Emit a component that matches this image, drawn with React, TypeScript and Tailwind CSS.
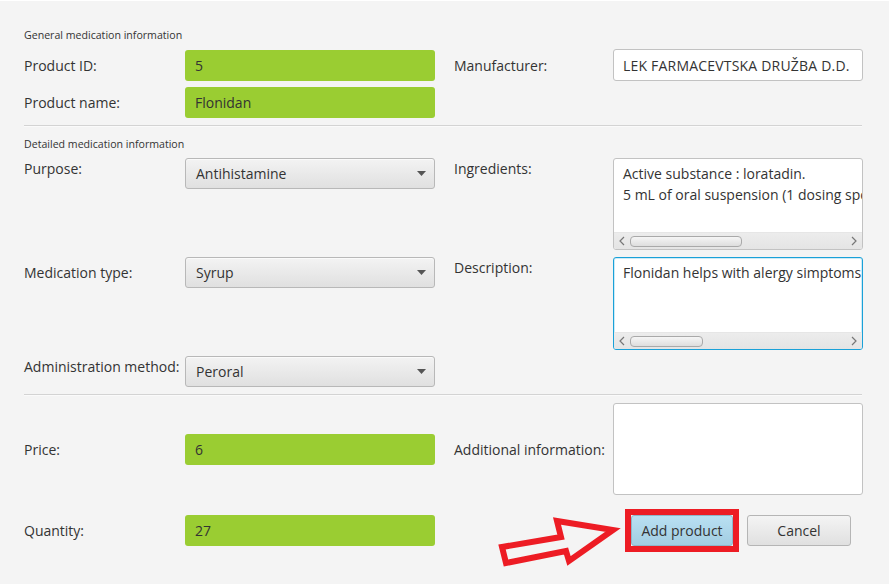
import React from "react";

function GreenField({ value }: { value: string }) {
  return (
    <div className="flex h-[31px] w-[250px] items-center rounded-[3px] bg-[#9acd32] px-[10px] text-[14px] text-[#333]">
      {value}
    </div>
  );
}

function Combo({ value }: { value: string }) {
  return (
    <div className="flex h-[31px] w-[250px] items-center justify-between rounded-[3px] border border-[#b8b8b8] bg-gradient-to-b from-[#f3f3f3] to-[#e0e0e0] pl-[10px] pr-[8px] text-[14px] text-[#333] shadow-[inset_0_1px_0_#fafafa]">
      <span>{value}</span>
      <svg width="9" height="5" viewBox="0 0 9 5">
        <polygon points="0,0 9,0 4.5,5" fill="#555" />
      </svg>
    </div>
  );
}

function ScrollBar({ thumb }: { thumb: number }) {
  return (
    <div className="flex h-[17px] shrink-0 items-center border-t border-[#e6e6e6] bg-gradient-to-b from-[#ececec] to-[#e4e4e4] px-[4px]">
      <svg width="8" height="10" viewBox="0 0 8 10" className="shrink-0">
        <polyline points="6,1 2,5 6,9" fill="none" stroke="#777" strokeWidth="1.2" />
      </svg>
      <div className="ml-[4px] h-[11px] rounded-[4px] border border-[#a9a9a9] bg-gradient-to-b from-[#f5f5f5] to-[#dedede]" style={{ width: thumb }} />
      <div className="flex-1" />
      <svg width="8" height="10" viewBox="0 0 8 10" className="shrink-0">
        <polyline points="2,1 6,5 2,9" fill="none" stroke="#777" strokeWidth="1.2" />
      </svg>
    </div>
  );
}

function TextArea({
  lines,
  focused,
  scroll,
  thumb,
  h,
}: {
  lines: string[];
  focused?: boolean;
  scroll?: boolean;
  thumb?: number;
  h: string;
}) {
  return (
    <div
      className={
        "flex w-[250px] flex-col overflow-hidden rounded-[3px] bg-white " +
        h +
        (focused
          ? " border border-[#1aa1d8] shadow-[inset_0_0_0_1px_#cdeaf6]"
          : " border border-[#c2c2c2]")
      }
    >
      <div className="flex-1 overflow-hidden whitespace-nowrap pl-[9px] pt-[4px] text-[14px] leading-[21px] text-[#333]">
        {lines.map((l, i) => (
          <div key={i}>{l}</div>
        ))}
      </div>
      {scroll && <ScrollBar thumb={thumb || 100} />}
    </div>
  );
}

function Separator() {
  return (
    <div className="w-[838px]">
      <div className="h-px bg-[#d3d3d3]" />
      <div className="h-px bg-[#fafafa]" />
    </div>
  );
}

export default function App() {
  return (
    <div className="relative h-[584px] w-[889px] overflow-hidden border-t border-white bg-[#f4f4f4] pl-[24px] font-['Open_Sans',sans-serif] text-[#333]">
      {/* Section 1 */}
      <div className="pt-[27px]">
        <div className="h-[14px] text-[10.6px] leading-[14px]">General medication information</div>
        <div className="mt-[7px] flex h-[32px] items-center">
          <div className="w-[161px] text-[14px]">Product ID:</div>
          <GreenField value="5" />
          <div className="ml-[19px] w-[159px] text-[14px]">Manufacturer:</div>
          <div className="flex h-[32px] w-[250px] items-center rounded-[3px] border border-[#c2c2c2] bg-white pl-[9px] text-[14px] tracking-[0.2px]">
            LEK FARMACEVTSKA DRUŽBA D.D.
          </div>
        </div>
        <div className="mt-[6px] flex h-[31px] items-center">
          <div className="w-[161px] text-[14px]">Product name:</div>
          <GreenField value="Flonidan" />
        </div>
        <div className="mt-[7px]">
          <Separator />
        </div>
      </div>

      {/* Section 2 */}
      <div className="pt-[10px]">
        <div className="h-[14px] text-[10.6px] leading-[14px]">Detailed medication information</div>
        <div className="mt-[7px] flex h-[92px] items-start">
          <div className="w-[161px] pt-[1px] text-[14px] leading-[20px]">Purpose:</div>
          <Combo value="Antihistamine" />
          <div className="ml-[19px] w-[159px] pt-[1px] text-[14px] leading-[20px]">Ingredients:</div>
          <TextArea
            h="h-[92px]"
            scroll
            thumb={112}
            lines={["Active substance : loratadin.", "5 mL of oral suspension (1 dosing spoon) contains 5 mg loratadine."]}
          />
        </div>
        <div className="mt-[7px] flex h-[93px] items-start">
          <div className="flex h-[31px] w-[161px] items-center text-[14px]">Medication type:</div>
          <Combo value="Syrup" />
          <div className="ml-[19px] w-[159px] pt-[1px] text-[14px] leading-[20px]">Description:</div>
          <TextArea
            h="h-[93px]"
            focused
            scroll
            thumb={73}
            lines={["Flonidan helps with alergy simptoms such as sneezing and itching."]}
          />
        </div>
        <div className="mt-[6px] flex h-[31px] items-start">
          <div className="w-[161px] pt-[1px] text-[14px] leading-[20px]">Administration method:</div>
          <Combo value="Peroral" />
        </div>
        <div className="mt-[7px]">
          <Separator />
        </div>
      </div>

      {/* Section 3 */}
      <div className="pt-[7px]">
        <div className="flex h-[92px] items-center">
          <div className="w-[161px] text-[14px]">Price:</div>
          <div className="flex h-[92px] items-center">
            <div className="mt-[1px]">
              <GreenField value="6" />
            </div>
          </div>
          <div className="ml-[19px] w-[159px] text-[14px]">Additional information:</div>
          <div className="h-[92px] w-[250px] rounded-[3px] border border-[#c2c2c2] bg-white" />
        </div>
        <div className="mt-[19px] flex h-[32px] items-center">
          <div className="w-[161px] text-[14px]">Quantity:</div>
          <GreenField value="27" />
          <div className="ml-[190px] border-[6px] border-[#ed1c24]">
            <div className="flex h-[31px] w-[102px] items-center justify-center rounded-[3px] border border-[#8fb5c8] bg-gradient-to-b from-[#b9e0f2] to-[#a2cde2] text-[14px]">
              Add product
            </div>
          </div>
          <div className="ml-[8px] flex h-[31px] w-[104px] items-center justify-center rounded-[3px] border border-[#b5b5b5] bg-gradient-to-b from-[#f4f4f4] to-[#e0e0e0] text-[14px]">
            Cancel
          </div>
        </div>
      </div>

      {/* Annotation arrow */}
      <svg className="absolute left-0 top-0" width="889" height="584" viewBox="0 0 889 584">
        <polygon
          points="502,546 561,536 557,520 613,529 569,560 566,550 506,562"
          fill="none"
          stroke="#ed1c24"
          strokeWidth="6"
          strokeLinejoin="miter"
        />
      </svg>
    </div>
  );
}
